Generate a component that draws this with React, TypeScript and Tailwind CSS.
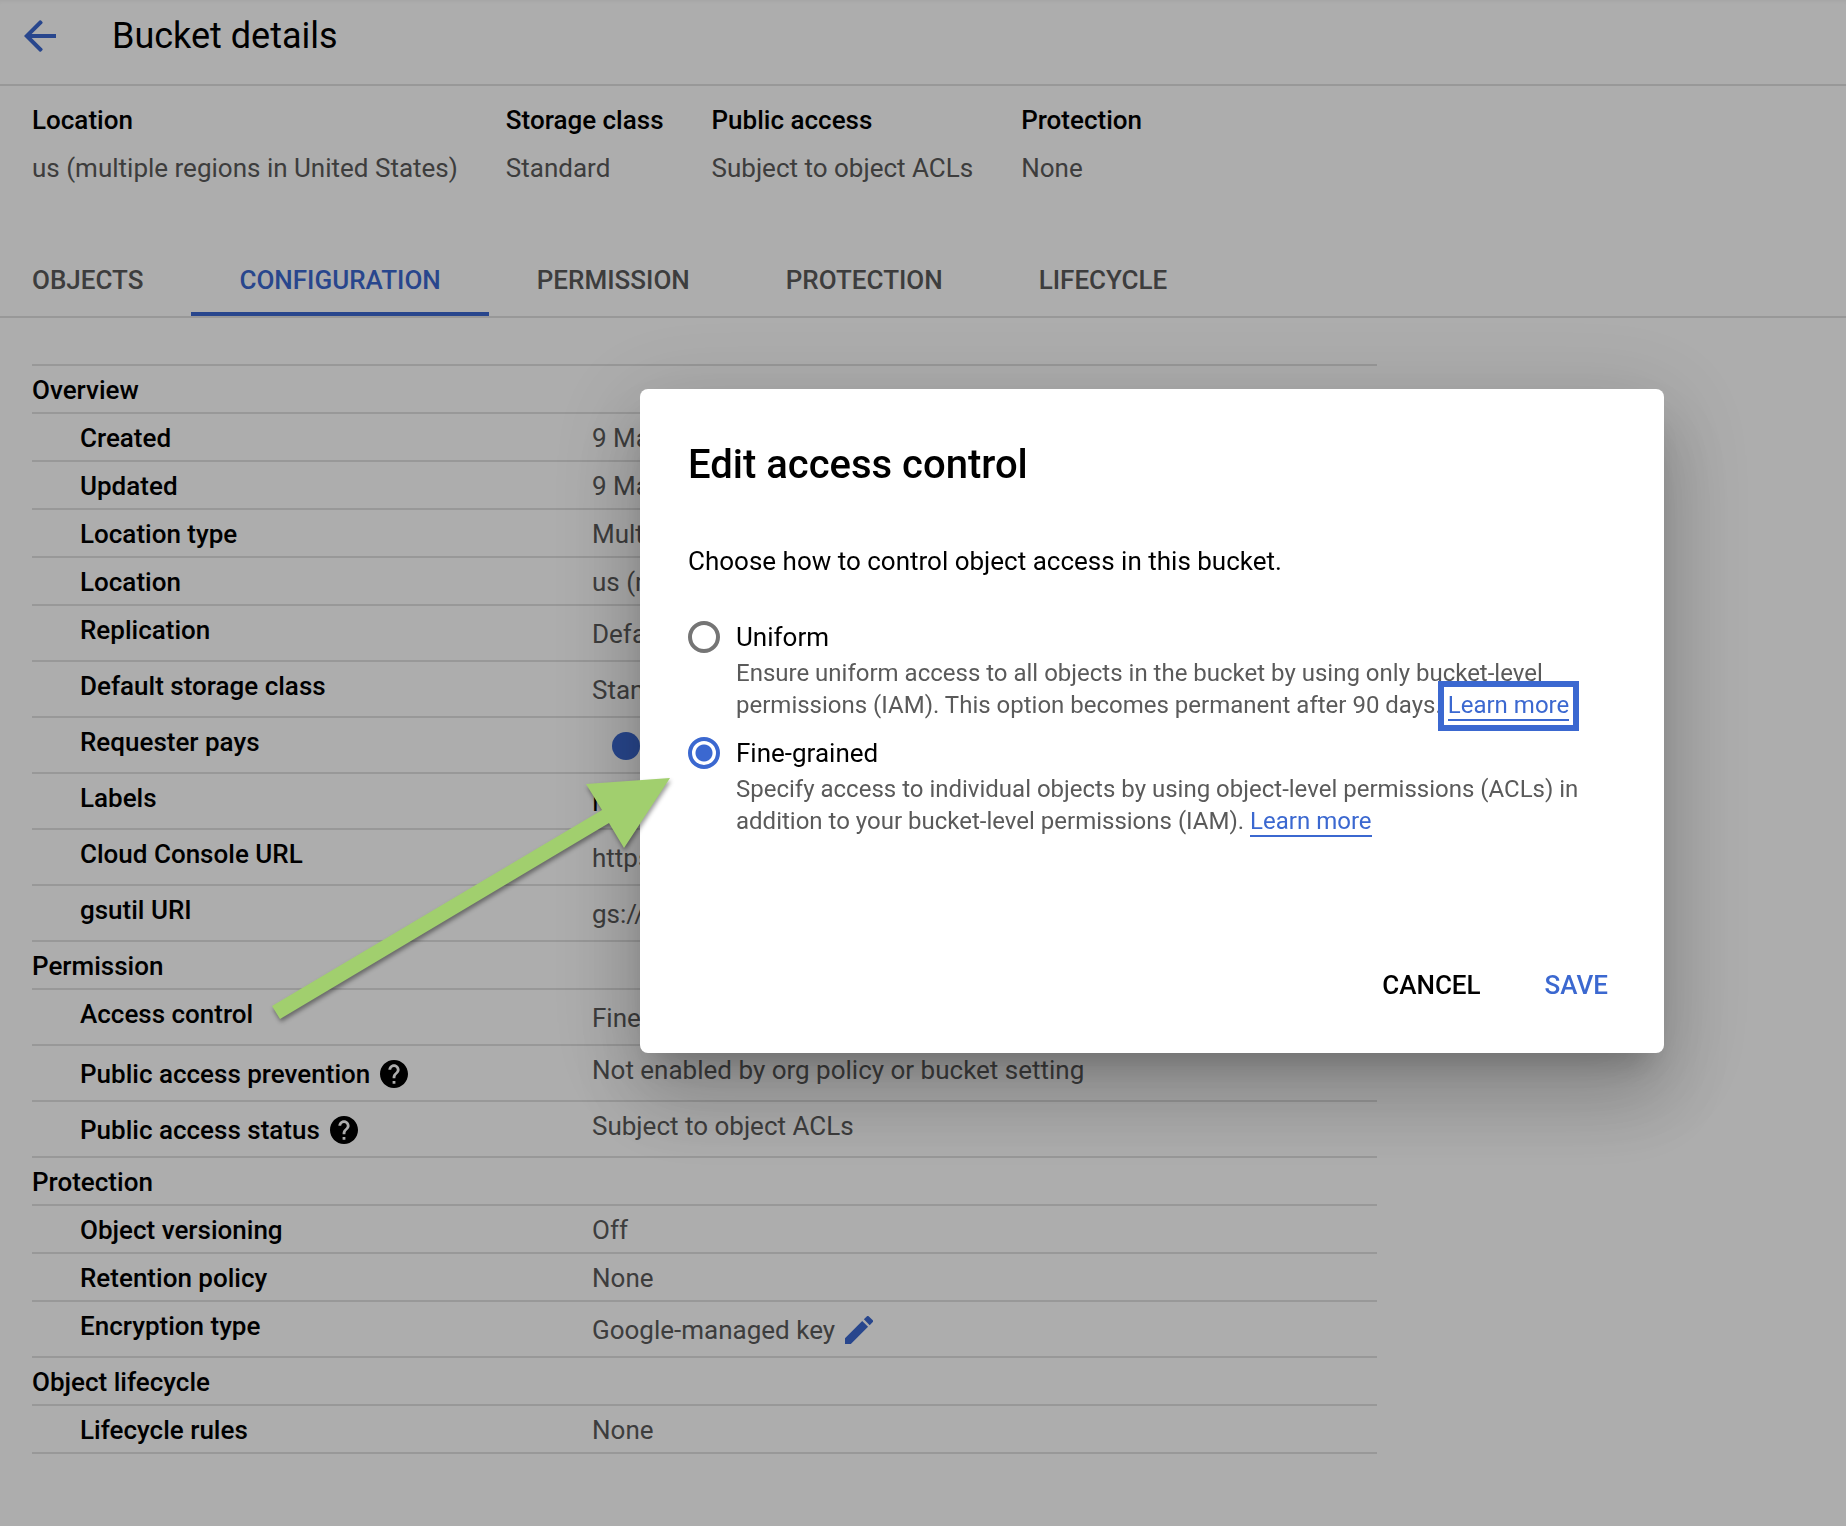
import type { ReactNode } from "react";

const TABS = ["OBJECTS", "CONFIGURATION", "PERMISSION", "PROTECTION", "LIFECYCLE"];

const SUMMARY = [
  { label: "Location", value: "us (multiple regions in United States)" },
  { label: "Storage class", value: "Standard" },
  { label: "Public access", value: "Subject to object ACLs" },
  { label: "Protection", value: "None" },
];

type Row = {
  label: string;
  value: ReactNode;
  tall?: boolean;
  help?: boolean;
};

type Section = { title: string; rows: Row[] };

function HelpIcon() {
  return (
    <svg viewBox="2 2 20 20" className="size-7" fill="currentColor" aria-hidden="true">
      <path d="M12 2C6.48 2 2 6.48 2 12s4.48 10 10 10 10-4.48 10-10S17.52 2 12 2zm1 17h-2v-2h2v2zm2.07-7.75l-.9.92C13.45 12.9 13 13.5 13 15h-2v-.5c0-1.1.45-2.1 1.17-2.83l1.24-1.26c.37-.36.59-.86.59-1.41 0-1.1-.9-2-2-2s-2 .9-2 2H8c0-2.21 1.79-4 4-4s4 1.79 4 4c0 .88-.36 1.68-.93 2.25z" />
    </svg>
  );
}

function PencilIcon() {
  return (
    <svg viewBox="3 3 18 18" className="size-7" fill="currentColor" aria-hidden="true">
      <path d="M3 17.25V21h3.75L17.81 9.94l-3.75-3.75L3 17.25zM20.71 7.04a.996.996 0 0 0 0-1.41l-2.34-2.34a.996.996 0 0 0-1.41 0l-1.83 1.83 3.75 3.75 1.83-1.83z" />
    </svg>
  );
}

const SECTIONS: Section[] = [
  {
    title: "Overview",
    rows: [
      { label: "Created", value: "9 March" },
      { label: "Updated", value: "9 March" },
      { label: "Location type", value: "Multi" },
      { label: "Location", value: "us (multi)" },
      { label: "Replication", value: "Default", tall: true },
      { label: "Default storage class", value: "Standard", tall: true },
      {
        label: "Requester pays",
        tall: true,
        value: (
          <button
            type="button"
            role="switch"
            aria-checked="false"
            aria-label="Requester pays"
            className="ml-5 size-7 rounded-full bg-[#3b68d0]"
          />
        ),
      },
      { label: "Labels", value: <span className="text-black">None</span>, tall: true },
      { label: "Cloud Console URL", value: "https://", tall: true },
      { label: "gsutil URI", value: "gs://", tall: true },
    ],
  },
  {
    title: "Permission",
    rows: [
      { label: "Access control", value: "Fine-grained", tall: true },
      { label: "Public access prevention", value: "Not enabled by org policy or bucket setting", help: true },
      { label: "Public access status", value: "Subject to object ACLs", help: true },
    ],
  },
  {
    title: "Protection",
    rows: [
      { label: "Object versioning", value: "Off" },
      { label: "Retention policy", value: "None" },
      {
        label: "Encryption type",
        tall: true,
        value: (
          <>
            Google-managed key
            <button type="button" aria-label="Edit encryption type" className="ml-2.5 text-[#3b68d0]">
              <PencilIcon />
            </button>
          </>
        ),
      },
    ],
  },
  {
    title: "Object lifecycle",
    rows: [{ label: "Lifecycle rules", value: "None" }],
  },
];

function Header() {
  return (
    <header className="flex h-[86px] items-start gap-14 border-b-2 border-[#e0e0e0] pt-3 pl-6 shadow-[inset_0_4px_4px_-3px_rgba(0,0,0,0.06)]">
      <button type="button" aria-label="Back" className="flex h-12 items-center text-[#3b68d0]">
        <svg viewBox="4 4 16 16" className="size-8" fill="currentColor" aria-hidden="true">
          <path d="M20 11H7.83l5.3-5.3q.4-.4 0-.8l-.6-.6q-.4-.4-.8 0L4 12l7.73 7.7q.4.4.8 0l.6-.6q.4-.4 0-.8L7.83 13H20v-2z" />
        </svg>
      </button>
      <h1 className="text-[36px] leading-12">Bucket details</h1>
    </header>
  );
}

function Summary() {
  return (
    <dl className="flex gap-12 px-8 pt-[18px]">
      {SUMMARY.map((item) => (
        <div key={item.label}>
          <dt className="leading-8 font-medium">{item.label}</dt>
          <dd className="pt-4 leading-8 text-[#5a5a5a]">{item.value}</dd>
        </div>
      ))}
    </dl>
  );
}

function Tabs() {
  return (
    <nav role="tablist" className="mt-16 flex border-b-2 border-[#e0e0e0]">
      {TABS.map((tab) => {
        const active = tab === "CONFIGURATION";
        return (
          <button
            key={tab}
            type="button"
            role="tab"
            aria-selected={active}
            className={
              active
                ? "border-b-4 border-[#3b68d0] px-12 pt-4 pb-4 leading-8 font-medium text-[#3b68d0]"
                : "border-b-4 border-transparent px-12 pt-4 pb-4 leading-8 font-medium text-[#5a5a5a] first:pl-8"
            }
          >
            {tab}
          </button>
        );
      })}
    </nav>
  );
}

function ConfigTable() {
  return (
    <table className="mt-[46px] ml-8 w-[calc(73%-3px)] table-fixed border-separate border-spacing-0 border-b-2 border-[#e0e0e0] text-left">
      <colgroup>
        <col className="w-[560px]" />
        <col />
      </colgroup>
      {SECTIONS.map((section) => (
        <tbody key={section.title}>
          <tr>
            <th colSpan={2} scope="rowgroup" className="border-t-2 border-[#e0e0e0] pt-2 pb-1.5 leading-8 font-medium">
              {section.title}
            </th>
          </tr>
          {section.rows.map((row) => (
            <tr key={row.label}>
              <th scope="row" className="border-t-2 border-[#e0e0e0] pt-2 pb-1.5 pl-12 align-top leading-8 font-medium">
                {row.help ? (
                  <span className="flex h-10 items-center gap-2.5">
                    {row.label}
                    <HelpIcon />
                  </span>
                ) : (
                  row.label
                )}
              </th>
              <td className="border-t-2 border-[#e0e0e0] pt-2 pb-1.5 align-top leading-8 text-[#5a5a5a]">
                {row.tall ? <div className="flex h-10 items-center">{row.value}</div> : row.value}
              </td>
            </tr>
          ))}
        </tbody>
      ))}
    </table>
  );
}

function RadioOption(props: { id: string; label: string; checked?: boolean; children: ReactNode }) {
  return (
    <div className="flex items-start gap-4">
      <input
        type="radio"
        name="access-control"
        id={props.id}
        defaultChecked={props.checked}
        className="mt-1 size-8 shrink-0 appearance-none rounded-full border-4 border-[#757575] bg-white checked:border-[#3b68d0] checked:bg-[radial-gradient(circle,#3b68d0_8px,white_9px)]"
      />
      <div>
        <label htmlFor={props.id} className="block leading-10">
          {props.label}
        </label>
        <p className="text-[24px] leading-8 text-[#5a5a5a]">{props.children}</p>
      </div>
    </div>
  );
}

function LearnMore({ focused }: { focused?: boolean }) {
  return (
    <a
      href="#learn-more"
      className={
        focused
          ? "border-b-2 border-[#3b68d0] text-[#3b68d0] outline-6 outline-offset-4 outline-[#3b68d0]"
          : "border-b-2 border-[#3b68d0] text-[#3b68d0]"
      }
    >
      Learn more
    </a>
  );
}

function AccessDialog() {
  return (
    <div className="fixed inset-0 flex items-start justify-end bg-black/32 pt-[389px] pr-[182px]">
      <div
        role="dialog"
        aria-modal="true"
        aria-labelledby="dialog-title"
        className="w-full max-w-[1024px] rounded-lg bg-white px-12 pt-12 pb-9 shadow-[0_22px_30px_-14px_rgba(0,0,0,0.2),0_48px_76px_6px_rgba(0,0,0,0.14),0_18px_92px_16px_rgba(0,0,0,0.12)]"
      >
        <h2 id="dialog-title" className="text-[40px] leading-14 font-medium">
          Edit access control
        </h2>
        <p className="pt-12 leading-10">Choose how to control object access in this bucket.</p>
        <div className="flex flex-col gap-3 pt-9">
          <RadioOption id="uniform" label="Uniform">
            Ensure uniform access to all objects in the bucket by using only bucket-level permissions (IAM). This option
            becomes permanent after 90 days. <LearnMore focused />
          </RadioOption>
          <RadioOption id="fine-grained" label="Fine-grained" checked>
            Specify access to individual objects by using object-level permissions (ACLs) in addition to your
            bucket-level permissions (IAM). <LearnMore />
          </RadioOption>
        </div>
        <div className="flex justify-end pt-29">
          <button type="button" className="px-8 py-3 leading-10 font-medium">
            CANCEL
          </button>
          <button type="button" className="py-3 pr-2 pl-8 leading-10 font-medium text-[#3b68d0]">
            SAVE
          </button>
        </div>
      </div>
    </div>
  );
}

function PointerArrow() {
  return (
    <svg
      viewBox="0 0 400 246"
      className="pointer-events-none absolute top-[776px] left-[271px] w-[400px] drop-shadow-[1px_3px_2px_rgba(0,0,0,0.4)]"
      aria-hidden="true"
    >
      <path d="M399 2L353 72L338 47L9 243L1 230L331 34L315 8Z" fill="#a1cf6e" />
    </svg>
  );
}

export default function App() {
  return (
    <div className="relative min-h-screen overflow-hidden bg-white font-[Roboto,sans-serif] text-[26px] text-black">
      <Header />
      <main>
        <Summary />
        <Tabs />
        <ConfigTable />
      </main>
      <AccessDialog />
      <PointerArrow />
    </div>
  );
}
